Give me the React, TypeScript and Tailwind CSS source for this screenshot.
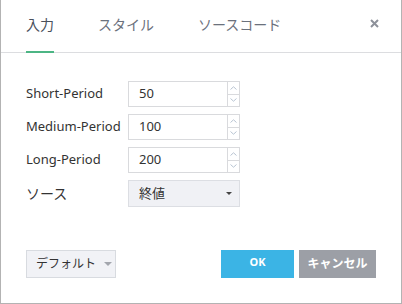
import React, { useState } from "react";

const font = "font-['Noto_Sans','Noto_Sans_CJK_JP',sans-serif]";

const tabs = ["入力", "スタイル", "ソースコード"];

const fields = [
  { label: "Short-Period", value: "50" },
  { label: "Medium-Period", value: "100" },
  { label: "Long-Period", value: "200" },
];

const Spinner: React.FC = () => (
  <div className="flex flex-col w-[12px] border-l border-[#d9dadd]">
    <div className="flex-1 flex items-center justify-center border-b border-[#d9dadd]">
      <svg width="7" height="4" viewBox="0 0 7 4">
        <path d="M0.5 3.5 L3.5 0.8 L6.5 3.5" fill="none" stroke="#b8c4d2" strokeWidth="1" />
      </svg>
    </div>
    <div className="flex-1 flex items-center justify-center">
      <svg width="7" height="4" viewBox="0 0 7 4">
        <path d="M0.5 0.5 L3.5 3.2 L6.5 0.5" fill="none" stroke="#b8c4d2" strokeWidth="1" />
      </svg>
    </div>
  </div>
);

const Caret: React.FC<{ color?: string; w?: number }> = ({ color = "#555", w = 7 }) => (
  <svg width={w} height={Math.ceil(w / 2)} viewBox="0 0 8 4">
    <path d="M0 0 L8 0 L4 4 Z" fill={color} />
  </svg>
);

const App: React.FC = () => {
  const [active, setActive] = useState(0);
  const [values, setValues] = useState(fields.map((f) => f.value));

  return (
    <div className={`w-[402px] h-[304px] bg-white border border-t-0 border-[#b3b3b3] flex flex-col ${font}`}>
      <div className="h-[53px] border-b border-[#dcdde0] flex items-stretch pl-[25px] pr-[22px]">
        <div className="flex gap-[44px]">
          {tabs.map((t, i) => (
            <button
              key={t}
              onClick={() => setActive(i)}
              className={`relative flex items-center pb-[2px] text-[14px] leading-none ${
                i === active ? "text-[#4a505c]" : "text-[#6b717c]"
              }`}
            >
              {t}
              {i === active && (
                <span className="absolute left-0 right-0 bottom-[-1px] h-[2px] bg-[#4cb584]" />
              )}
            </button>
          ))}
        </div>
        <button className="ml-auto flex items-center pb-[5px]">
          <svg width="9" height="9" viewBox="0 0 9 9">
            <path d="M1 1 L8 8 M8 1 L1 8" stroke="#8d919a" strokeWidth="2" />
          </svg>
        </button>
      </div>

      <div className="flex flex-col gap-[7px] pl-[25px] pt-[28px]">
        {fields.map((f, i) => (
          <div key={f.label} className="flex items-center h-[26px]">
            <label className="w-[102px] text-[13px] text-[#333]">{f.label}</label>
            <div className="flex w-[112px] h-[26px] border border-[#d9dadd]">
              <input
                value={values[i]}
                onChange={(e) => {
                  const v = [...values];
                  v[i] = e.target.value;
                  setValues(v);
                }}
                className="flex-1 min-w-0 pl-[10px] text-[13px] text-[#333] outline-none"
              />
              <Spinner />
            </div>
          </div>
        ))}
        <div className="flex items-center h-[27px]">
          <label className="w-[102px] text-[14px] text-[#333]">ソース</label>
          <div className="flex items-center justify-between w-[112px] h-[27px] border border-[#dcdee3] bg-[#f0f1f5] pl-[10px] pr-[7px]">
            <span className="text-[13px] text-[#333]">終値</span>
            <Caret color="#444" w={6} />
          </div>
        </div>
      </div>

      <div className="mt-auto mb-[25px] flex items-center pl-[25px] pr-[25px]">
        <button className="shrink-0 whitespace-nowrap flex items-center gap-[8px] h-[28px] w-[90px] pl-[9px] bg-[#f1f2f6] border border-[#d8dbe0] text-[12px] text-[#333]">
          デフォルト
          <Caret color="#a3a6ad" w={8} />
        </button>
        <div className="ml-auto flex gap-[5px]">
          <button className="h-[28px] w-[73px] bg-[#3bb4e5] text-white text-[11px] font-bold pb-[4px]">
            OK
          </button>
          <button className="h-[28px] w-[77px] whitespace-nowrap bg-[#9c9fa6] text-white text-[12px] font-bold">
            キャンセル
          </button>
        </div>
      </div>
    </div>
  );
};

export default App;
